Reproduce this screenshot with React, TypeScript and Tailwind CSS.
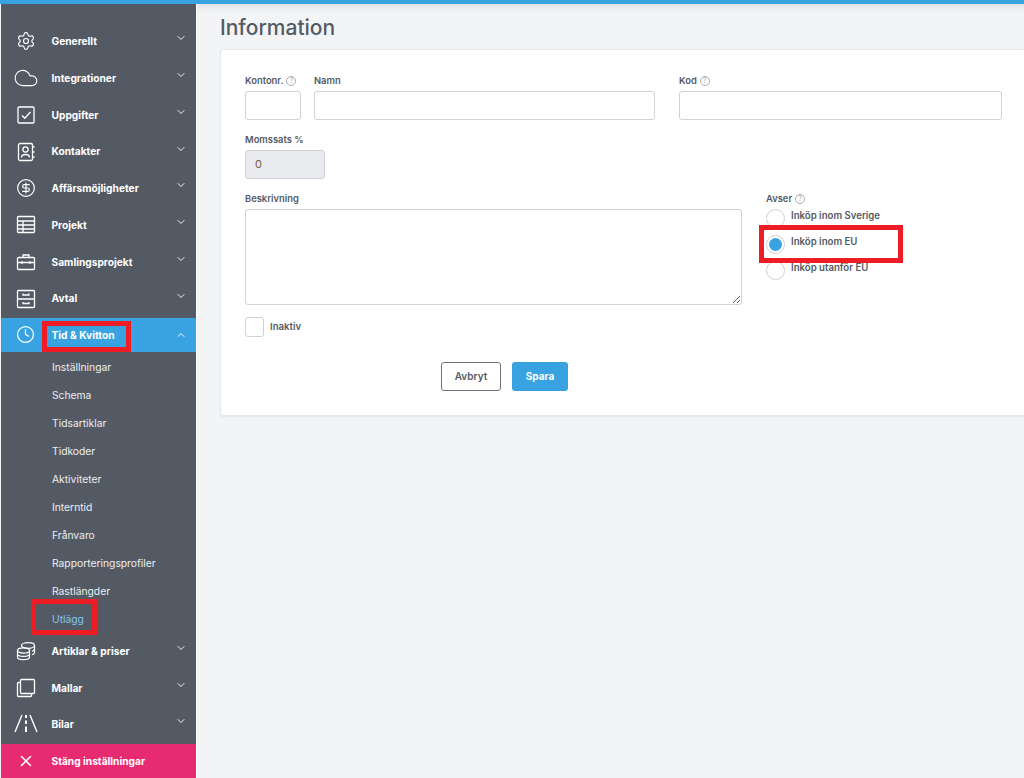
import { ReactNode } from "react";
import { ChevronDown, ChevronUp, CircleDollarSign, Clock, Cloud, Settings, X } from "lucide-react";

const iconClass = "h-5 w-5";

function CheckBoxIcon() {
  return (
    <svg viewBox="0 0 20 20" className="h-5 w-5" fill="none" stroke="currentColor" strokeWidth="1.3">
      <rect x="2" y="2" width="16" height="16" rx="1" />
      <path d="M6 10.5l2.8 2.8L14.5 7" />
    </svg>
  );
}

function ContactIcon() {
  return (
    <svg viewBox="0 0 20 20" className="h-5 w-5" fill="none" stroke="currentColor" strokeWidth="1.3">
      <rect x="2.5" y="1.5" width="14" height="17" rx="1.5" />
      <circle cx="9.5" cy="7.5" r="2.6" />
      <path d="M5.5 15.5c0-4 8-4 8 0" />
      <path d="M17 5h1.5M17 10h1.5M17 15h1.5" />
    </svg>
  );
}

function TableIcon() {
  return (
    <svg viewBox="0 0 20 20" className="h-5 w-5" fill="none" stroke="currentColor" strokeWidth="1.3">
      <rect x="1.5" y="1.5" width="17" height="16" rx="1" />
      <path d="M1.5 6h17M1.5 10h17M1.5 14h17M7 6v11.5" />
    </svg>
  );
}

function CaseIcon() {
  return (
    <svg viewBox="0 0 20 20" className="h-5 w-5" fill="none" stroke="currentColor" strokeWidth="1.3">
      <rect x="1.5" y="5.5" width="17" height="12" rx="1" />
      <path d="M7 5.5V3h6v2.5M1.5 10.5h17M6 9v3M14 9v3" />
    </svg>
  );
}

function DrawerIcon() {
  return (
    <svg viewBox="0 0 20 20" className="h-5 w-5" fill="none" stroke="currentColor" strokeWidth="1.3">
      <rect x="1.5" y="1.5" width="17" height="17" rx="1" />
      <path d="M1.5 10h17M7 4.5v1.5h6V4.5M7 13v1.5h6V13" />
    </svg>
  );
}

function CoinsIcon() {
  return (
    <svg viewBox="0 0 20 20" className="h-5 w-5" fill="none" stroke="currentColor" strokeWidth="1.2">
      <ellipse cx="12" cy="4.5" rx="6.5" ry="2.8" />
      <path d="M18.5 4.5v7c0 1-1 1.8-2.5 2.3M18.5 8c0 1-1 1.8-2.5 2.3" />
      <ellipse cx="7.5" cy="9.5" rx="6" ry="2.6" />
      <path d="M1.5 9.5v6.5c0 1.5 2.7 2.6 6 2.6s6-1.1 6-2.6V9.5M1.5 12.8c0 1.5 2.7 2.6 6 2.6s6-1.1 6-2.6" />
    </svg>
  );
}

function CopyIcon() {
  return (
    <svg viewBox="0 0 20 20" className="h-5 w-5" fill="none" stroke="currentColor" strokeWidth="1.3">
      <rect x="4.5" y="1.5" width="14" height="14" rx="1" />
      <path d="M4.5 4.5H2.5a1 1 0 0 0-1 1v12a1 1 0 0 0 1 1h12a1 1 0 0 0 1-1v-2" />
    </svg>
  );
}

function RoadIcon() {
  return (
    <svg viewBox="0 0 24 20" className="h-5 w-6" fill="none" stroke="currentColor" strokeWidth="1.4">
      <path d="M8 1L1 18M16 1l7 17" />
      <path d="M12 1v3M12 6.5v3.5M12 12.5v5.5" strokeWidth="2" />
    </svg>
  );
}

type Item = { label: string; icon: ReactNode };

const topItems: Item[] = [
  { label: "Generellt", icon: <Settings className={iconClass} strokeWidth={1.4} /> },
  { label: "Integrationer", icon: <Cloud className="h-[26px] w-[26px]" strokeWidth={1} /> },
  { label: "Uppgifter", icon: <CheckBoxIcon /> },
  { label: "Kontakter", icon: <ContactIcon /> },
  { label: "Affärsmöjligheter", icon: <CircleDollarSign className={iconClass} strokeWidth={1.4} /> },
  { label: "Projekt", icon: <TableIcon /> },
  { label: "Samlingsprojekt", icon: <CaseIcon /> },
  { label: "Avtal", icon: <DrawerIcon /> },
];

const subItems = [
  "Inställningar",
  "Schema",
  "Tidsartiklar",
  "Tidkoder",
  "Aktiviteter",
  "Interntid",
  "Frånvaro",
  "Rapporteringsprofiler",
  "Rastlängder",
];

const bottomItems: Item[] = [
  { label: "Artiklar & priser", icon: <CoinsIcon /> },
  { label: "Mallar", icon: <CopyIcon /> },
  { label: "Bilar", icon: <RoadIcon /> },
];

function NavRow({ item, tight }: { item: Item; tight?: boolean }) {
  return (
    <div className={`flex items-center text-white ${tight ? "h-[36.5px]" : "h-[36.75px]"}`}>
      <div className="-ml-[1px] flex w-[51.5px] shrink-0 justify-center">{item.icon}</div>
      <span className="flex-1 pt-[1px] text-[10.2px] font-bold">{item.label}</span>
      <ChevronDown className="mr-[9px] mb-[6px] h-[12px] w-[12px]" strokeWidth={1.8} />
    </div>
  );
}

function Help() {
  return (
    <span className="relative -top-[1px] ml-[3px] inline-flex h-[10px] w-[10px] items-center justify-center rounded-full border border-[#a9adb3] text-[7px] leading-none font-normal text-[#a9adb3]">
      ?
    </span>
  );
}

function Label({ children, help }: { children: string; help?: boolean }) {
  return (
    <div className="h-[11px] text-[9.4px] leading-[11px] font-semibold whitespace-nowrap text-[#535a64]">
      {children}
      {help && <Help />}
    </div>
  );
}

function TextBox({ className }: { className: string }) {
  return <div className={`mt-[5px] h-[29px] rounded-[3px] border border-[#ced1d6] bg-white ${className}`} />;
}

function Radio({ label, checked }: { label: string; checked?: boolean }) {
  return (
    <div className="flex h-[26px] items-start">
      <div className="flex h-[19px] w-[19px] shrink-0 items-center justify-center rounded-full border border-[#ced1d6] bg-white">
        {checked && <div className="h-[13px] w-[13px] rounded-full bg-[#38a3e0]" />}
      </div>
      <span className="ml-[6px] text-[9.65px] leading-[14px] font-semibold text-[#535a64]">{label}</span>
    </div>
  );
}

export default function App() {
  return (
    <div className="relative h-[778px] w-[1024px] overflow-hidden bg-[#f3f4f6] font-['Inter',sans-serif]">
      <div className="h-[4px] bg-[#38a3e0]" />
      <div className="flex h-[774px]">
        <aside className="ml-[1px] flex w-[195px] shrink-0 flex-col bg-[#535a64] pt-[19px]">
          {topItems.map((item) => (
            <NavRow key={item.label} item={item} />
          ))}
          <div className="mt-[1px] flex h-[34px] items-center bg-[#38a3e0] text-white">
            <div className="-ml-[1px] flex w-[51.5px] shrink-0 justify-center">
              <Clock className="mb-[1px] h-[19px] w-[19px]" strokeWidth={1.6} />
            </div>
            <span className="flex-1 pt-[1px] text-[10.2px] font-bold">Tid &amp; Kvitton</span>
            <ChevronUp className="mr-[9px] h-[12px] w-[12px]" strokeWidth={1.8} />
          </div>
          <div className="flex flex-col pt-[2px]">
            {subItems.map((label) => (
              <div key={label} className="flex h-[28px] items-center pl-[51px] text-[10.3px] text-[#eceef0]">
                {label}
              </div>
            ))}
            <div className="flex h-[28px] items-center pl-[51px] text-[10.3px] text-[#85c5f5]">Utlägg</div>
          </div>
          <div className="-mt-[1px] flex flex-col">
            {bottomItems.map((item) => (
              <NavRow key={item.label} item={item} tight />
            ))}
          </div>
          <div className="mt-auto flex h-[34px] items-center bg-[#e72b70] text-white">
            <div className="-ml-[1px] flex w-[51.5px] shrink-0 justify-center">
              <X className="h-[18px] w-[18px]" strokeWidth={2} />
            </div>
            <span className="pt-[1px] text-[10.2px] font-bold">Stäng inställningar</span>
          </div>
        </aside>
        <div className="w-[1px] shrink-0 bg-white" />
        <main className="min-w-0 flex-1 bg-gradient-to-b from-[#e4e5e7] from-0% to-[#f3f4f6] to-[1.2%] pl-[23px]">
          <h1 className="pt-[11px] text-[21px] leading-[26px] font-medium text-[#535a64]">Information</h1>
          <section className="mt-[8px] h-[367px] w-[820px] rounded-l-[3px] border border-r-0 border-[#e6e7e9] bg-white pt-[25px] pl-[24px] shadow-[0_1px_2px_rgba(0,0,0,0.06)]">
            <div className="flex">
              <div className="w-[69px]">
                <Label help>Kontonr.</Label>
                <TextBox className="w-[56px]" />
              </div>
              <div className="w-[365px]">
                <Label>Namn</Label>
                <TextBox className="w-[341px]" />
              </div>
              <div>
                <Label help>Kod</Label>
                <TextBox className="w-[323px]" />
              </div>
            </div>
            <div className="mt-[14px]">
              <Label>Momssats %</Label>
              <div className="mt-[5px] flex h-[29px] w-[80px] items-center rounded-[3px] border border-[#ced1d6] bg-[#e9ebee] pl-[9px] text-[11px] text-[#7a5c50]">
                0
              </div>
            </div>
            <div className="mt-[14px] flex">
              <div className="w-[521px]">
                <Label>Beskrivning</Label>
                <textarea className="mt-[5px] block h-[96px] w-[497px] rounded-[3px] border border-[#ced1d6] bg-white" readOnly />
              </div>
              <div>
                <Label help>Avser</Label>
                <div className="mt-[5px]">
                  <Radio label="Inköp inom Sverige" />
                  <Radio label="Inköp inom EU" checked />
                  <Radio label="Inköp utanför EU" />
                </div>
              </div>
            </div>
            <div className="mt-[12px] flex items-center">
              <div className="h-[20px] w-[19px] rounded-[3px] border border-[#ced1d6] bg-white" />
              <span className="ml-[6px] text-[9.6px] font-semibold text-[#535a64]">Inaktiv</span>
            </div>
            <div className="mt-[25px] ml-[196px] flex gap-[11px]">
              <button className="h-[29px] w-[60px] rounded-[3px] border border-[#6d737c] bg-white text-[10px] font-semibold text-[#535a64]">
                Avbryt
              </button>
              <button className="h-[29px] w-[56px] rounded-[3px] bg-[#38a3e0] text-[10px] font-bold text-white">
                Spara
              </button>
            </div>
          </section>
        </main>
      </div>
      <div className="absolute top-[321px] left-[42px] h-[31px] w-[89px] border-[5px] border-[#ee1c25]" />
      <div className="absolute top-[599px] left-[31px] h-[36px] w-[66px] border-[5px] border-[#ee1c25]" />
      <div className="absolute top-[225px] left-[759px] h-[38px] w-[144px] border-[5px] border-[#ee1c25]" />
    </div>
  );
}
